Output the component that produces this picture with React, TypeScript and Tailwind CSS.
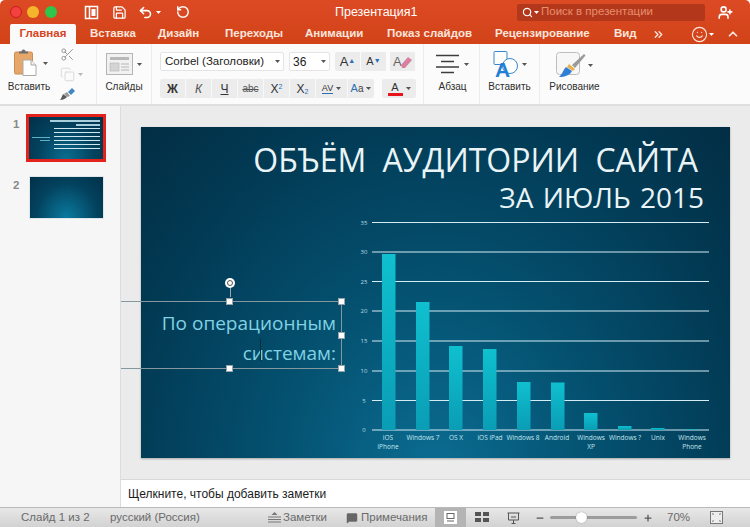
import {
  ChevronsRight,
  ChevronUp,
  Copy,
  MessageSquare,
  Minus,
  Plus,
  RotateCcw,
  Save,
  Scissors,
  Search,
  Smile,
  Undo2,
  UserPlus,
} from "lucide-react";

const tabs = [
  { label: "Вставка", w: "w-[44px]", ml: "ml-[14px]" },
  { label: "Дизайн", w: "w-[42px]", ml: "ml-[24px]" },
  { label: "Переходы", w: "w-[57px]", ml: "ml-[25px]" },
  { label: "Анимации", w: "w-[57px]", ml: "ml-[23px]" },
  { label: "Показ слайдов", w: "w-[85px]", ml: "ml-[25px]" },
  { label: "Рецензирование", w: "w-[95px]", ml: "ml-[23px]" },
  { label: "Вид", w: "w-[22px]", ml: "ml-[24px]" },
];

const bars = [
  { x: 382, top: 254 },
  { x: 416, top: 302 },
  { x: 449, top: 346 },
  { x: 483, top: 349 },
  { x: 517, top: 382 },
  { x: 551, top: 382.5 },
  { x: 584, top: 413 },
  { x: 618, top: 426 },
  { x: 651, top: 428 },
  { x: 685, top: 429.3 },
];

const gridLines = [
  { y: 222.5, label: "35" },
  { y: 252, label: "30" },
  { y: 281.5, label: "25" },
  { y: 311, label: "20" },
  { y: 341, label: "15" },
  { y: 371, label: "10" },
  { y: 400.5, label: "5" },
  { y: 430, label: "0" },
];

const categories = [
  { x: 388, lines: ["iOS", "iPhone"] },
  { x: 423, lines: ["Windows 7"] },
  { x: 456, lines: ["OS X"] },
  { x: 490, lines: ["iOS iPad"] },
  { x: 523, lines: ["Windows 8"] },
  { x: 557, lines: ["Android"] },
  { x: 591, lines: ["Windows", "XP"] },
  { x: 625, lines: ["Windows ?"] },
  { x: 658, lines: ["Unix"] },
  { x: 692, lines: ["Windows", "Phone"] },
];

function Caret({ className = "" }: { className?: string }) {
  return (
    <svg width="5" height="3" viewBox="0 0 5 3" className={className}>
      <path d="M0 0h5L2.5 3z" fill="#555" />
    </svg>
  );
}

function PasteIcon() {
  return (
    <svg width="24" height="27" viewBox="0 0 24 27">
      <rect x="0.5" y="3" width="18" height="22" rx="1.5" fill="#e5a76a" stroke="#c98d50" />
      <path d="M5 4.5V2.5h2.5a2 2 0 0 1 4 0H14v2z" fill="#6d6d6d" />
      <path d="M9 11h8l5 5v10.5H9z" fill="#fff" stroke="#a9a9a9" />
      <path d="M17 11v5h5" fill="#eee" stroke="#a9a9a9" />
    </svg>
  );
}

function SlideLayoutIcon() {
  return (
    <svg width="27" height="22" viewBox="0 0 27 22">
      <rect x="0.5" y="0.5" width="26" height="21" fill="#f1f1f1" stroke="#b5b5b5" />
      <rect x="4" y="4" width="19" height="3" fill="#b8b8b8" />
      <rect x="4" y="10" width="9" height="8" fill="#d4d4d4" stroke="#b5b5b5" strokeWidth="0.6" />
      <path d="M15 11h8M15 14h8M15 17h8" stroke="#b5b5b5" />
    </svg>
  );
}

function ParagraphIcon() {
  return (
    <svg width="23" height="20" viewBox="0 0 23 20">
      <path d="M0 1.5h23M5 7.5h13M0 13h23M5 18.5h13" stroke="#3d3d3d" strokeWidth="1.6" />
    </svg>
  );
}

function InsertTextIcon() {
  return (
    <svg width="26" height="34" viewBox="0 0 26 34">
      <rect x="1" y="0.5" width="13" height="13" rx="1" fill="#fff" stroke="#3b86c9" />
      <circle cx="17" cy="15" r="7.5" fill="#fff" stroke="#3b86c9" />
      <text x="2" y="26" fontFamily="Liberation Sans" fontWeight="700" fontSize="21" fill="#1f7ed6">
        A
      </text>
    </svg>
  );
}

function DrawingIcon() {
  return (
    <svg width="30" height="26" viewBox="0 0 30 26">
      <rect x="0.5" y="0.5" width="23" height="22" rx="3" fill="#f7f7f7" stroke="#bdbdbd" />
      <path d="M16 13L28 2l1.5 1.5L19 16z" fill="#9a9a9a" />
      <path d="M13 12l6 5-2 2-6-4z" fill="#e8b04a" />
      <path d="M10 15l6 4c-2 4-7 6-13 6 3-2 4-7 7-10z" fill="#2f7fd6" />
    </svg>
  );
}

function FormatClearIcon() {
  return (
    <svg width="20" height="16" viewBox="0 0 20 16">
      <text x="0" y="12" fontFamily="Liberation Sans" fontSize="13" fill="#666">
        A
      </text>
      <path d="M8 11l7-8 4 3-7 8H9z" fill="#d880a0" />
    </svg>
  );
}

function FontRowButton({ children, w = "w-[26px]" }: { children: React.ReactNode; w?: string }) {
  return (
    <div className={`flex h-full ${w} items-center justify-center border-r border-[#f8f8f8] text-[#333]`}>
      {children}
    </div>
  );
}

function GroupLabel({ children }: { children: React.ReactNode }) {
  return <div className="text-[10px] leading-[12px] text-[#2f2f2f]">{children}</div>;
}

function Handle() {
  return <div className="h-[7px] w-[7px] border border-[#9aa5aa] bg-white" />;
}

function Chart() {
  return (
    <svg width="360" height="240" viewBox="355 215 360 240" className="ml-[13px] shrink-0">
      <defs>
        <linearGradient id="barFill" x1="0" y1="0" x2="0" y2="1">
          <stop offset="0" stopColor="#0fc0cf" />
          <stop offset="1" stopColor="#0a9db5" />
        </linearGradient>
      </defs>
      {gridLines.map((g) => (
        <g key={g.label}>
          <line x1="372" x2="709" y1={g.y} y2={g.y} stroke="#d4ecf3" strokeWidth="1.2" />
          <text x="364" y={g.y + 2} textAnchor="middle" fontSize="6" fill="#b8dce6" fontFamily="Open Sans">
            {g.label}
          </text>
        </g>
      ))}
      {bars.map((b) => (
        <rect key={b.x} x={b.x} y={b.top} width="13.5" height={430 - b.top} fill="url(#barFill)" />
      ))}
      {categories.map((c) =>
        c.lines.map((line, i) => (
          <text
            key={line + c.x}
            x={c.x}
            y={440 + i * 8.5}
            textAnchor="middle"
            fontSize="6.5"
            fill="#c4e6ee"
            fontFamily="Open Sans"
          >
            {line}
          </text>
        ))
      )}
    </svg>
  );
}

export default function App() {
  return (
    <div className="flex h-[527px] w-[750px] flex-col overflow-hidden rounded-t-[5px] bg-white font-['Liberation_Sans',Arial,sans-serif]">
      {/* title bar */}
      <div className="bg-gradient-to-b from-[#dc4a24] to-[#d24318]">
        <div className="flex h-[24px] items-center pl-[10px] text-white">
          <div className="h-[12px] w-[12px] rounded-full border border-[#c81c24] bg-[#f2413e]" />
          <div className="ml-[5px] h-[12px] w-[12px] rounded-full bg-[#f5b52a]" />
          <div className="ml-[6px] h-[12px] w-[12px] rounded-full bg-[#2fc54a]" />
          <svg width="15" height="15" viewBox="0 0 15 15" className="ml-[27px]">
            <path d="M1.5 1.5h12v12h-12z M5.5 1.5v12" fill="none" stroke="#fff" strokeWidth="1.5" />
            <path d="M7.5 4h4v7h-4z" fill="#fff" />
          </svg>
          <Save size={15} strokeWidth={2} className="ml-[13px]" />
          <Undo2 size={15} strokeWidth={2.5} className="ml-[11px]" />
          <Caret className="ml-[3px] brightness-[5]" />
          <RotateCcw size={14} strokeWidth={2.5} className="ml-[15px]" />
          <div className="ml-[145px] w-[80px] text-[12.5px] font-medium whitespace-nowrap">Презентация1</div>
          <div className="ml-[102px] flex h-[17px] w-[188px] items-center rounded-[2px] bg-[#b3371a] pl-[5px] text-[#e88e70]">
            <Search size={11} strokeWidth={2.5} className="text-white" />
            <Caret className="ml-[1px] brightness-[5]" />
            <span className="ml-[2px] text-[11.5px]">Поиск в презентации</span>
          </div>
          <UserPlus size={15} strokeWidth={2.5} className="ml-[13px]" />
        </div>
        <div className="flex h-[20px] items-stretch pl-[10px] text-[11.5px] font-semibold text-[#fbe6dd]">
          <div className="flex w-[66px] items-center justify-center rounded-t-[2px] bg-[#fafafa] font-bold text-[#d8431f]">
            Главная
          </div>
          {tabs.map((t) => (
            <div key={t.label} className={`flex items-center whitespace-nowrap ${t.ml} ${t.w}`}>
              {t.label}
            </div>
          ))}
          <ChevronsRight size={13} strokeWidth={2.5} className="ml-[16px] self-center" />
          <Smile size={17} strokeWidth={1.6} className="ml-[26px] self-center" />
          <Caret className="ml-[1px] self-center brightness-[5]" />
          <ChevronUp size={14} strokeWidth={3} className="ml-[12px] self-center" />
        </div>
      </div>

      {/* ribbon */}
      <div className="flex h-[62px] shrink-0 border-b-2 border-[#dedede] bg-[#fbfbfb]">
        <div className="flex h-full w-[97px] border-r border-[#ececec] pl-[8px]">
          <div className="flex w-[42px] flex-col items-center">
            <div className="mt-[5px] flex h-[28px] items-start self-start pl-[6px]">
              <PasteIcon />
            </div>
            <div className="mt-[4px]">
              <GroupLabel>Вставить</GroupLabel>
            </div>
          </div>
          <Caret className="mt-[18px] -ml-[7px]" />
          <div className="ml-[12px] flex flex-col items-center gap-[5px] pt-[3px] text-[#9a9a9a]">
            <Scissors size={15} strokeWidth={1.6} />
            <div className="relative">
              <Copy size={15} strokeWidth={1.4} className="text-[#d5d5d5]" />
              <Caret className="absolute top-[6px] left-[18px] opacity-40" />
            </div>
            <svg width="15" height="14" viewBox="0 0 15 14">
              <path d="M8 5l4-4 3 3-4 4z" fill="#3f86c6" />
              <path d="M7 5l3 4-3 1-3-3z" fill="#999" />
              <path d="M3 7l4 3c-2 2-4 3-7 3 1-1 2-4 3-6z" fill="#5a5a5a" />
            </svg>
          </div>
        </div>
        <div className="flex h-full w-[55px] flex-col items-center border-r border-[#ececec]">
          <div className="mt-[9px] flex h-[22px] items-center">
            <SlideLayoutIcon />
            <Caret className="ml-[4px]" />
          </div>
          <div className="mt-[6px]">
            <GroupLabel>Слайды</GroupLabel>
          </div>
        </div>
        <div className="flex h-full w-[272px] flex-col gap-[8px] border-r border-[#ececec] pt-[8px] pl-[8px]">
          <div className="flex h-[19px] items-stretch">
            <div className="flex w-[124px] items-center justify-between rounded-[2px] border border-[#e4e4e4] bg-white pr-[3px] pl-[4px] text-[11.5px] whitespace-nowrap text-[#222]">
              Corbel (Заголовки)
              <Caret />
            </div>
            <div className="ml-[5px] flex w-[41px] items-center justify-between rounded-[2px] border border-[#e4e4e4] bg-white pr-[3px] pl-[3px] text-[12px] text-[#222]">
              36
              <Caret />
            </div>
            <div className="ml-[5px] flex w-[25px] items-center justify-center rounded-l-[2px] bg-[#ececec] text-[13px] text-[#333]">
              A<span className="text-[7px] text-[#2a6fb5]">▲</span>
            </div>
            <div className="ml-[1px] flex w-[25px] items-center justify-center bg-[#ececec] text-[11px] text-[#333]">
              A<span className="text-[7px] text-[#2a6fb5]">▼</span>
            </div>
            <div className="ml-[4px] flex w-[25px] items-center justify-center bg-[#ececec]">
              <FormatClearIcon />
            </div>
          </div>
          <div className="flex h-[19px] items-stretch">
            <div className="flex w-[214px] items-stretch rounded-[2px] bg-[#ececec] text-[12px]">
              <FontRowButton>
                <span className="font-bold">Ж</span>
              </FontRowButton>
              <FontRowButton>
                <span className="italic text-[#555]">К</span>
              </FontRowButton>
              <FontRowButton>
                <span className="underline">Ч</span>
              </FontRowButton>
              <FontRowButton>
                <span className="text-[10px] text-[#555] line-through">abc</span>
              </FontRowButton>
              <FontRowButton>
                <span>
                  X<sup className="text-[7px] text-[#2a6fb5]">2</sup>
                </span>
              </FontRowButton>
              <FontRowButton>
                <span>
                  X<sub className="text-[7px] text-[#2a6fb5]">2</sub>
                </span>
              </FontRowButton>
              <FontRowButton w="w-[32px]">
                <span className="border-b border-[#2a6fb5] text-[9px] leading-[10px]">AV</span>
                <Caret className="ml-[3px]" />
              </FontRowButton>
              <div className="flex flex-1 items-center justify-center text-[#444]">
                <span className="text-[11px] text-[#2a6fb5]">A</span>
                <span className="text-[10px]">a</span>
                <Caret className="ml-[3px]" />
              </div>
            </div>
            <div className="ml-[8px] flex w-[34px] items-center justify-center rounded-[2px] bg-[#ececec]">
              <div className="flex flex-col items-center">
                <span className="text-[11px] leading-[10px] text-[#333]">A</span>
                <div className="mt-[1px] h-[3px] w-[15px] bg-[#e8141c]" />
              </div>
              <Caret className="ml-[3px]" />
            </div>
          </div>
        </div>
        <div className="flex h-full w-[56px] flex-col items-center border-r border-[#ececec] pl-[2px]">
          <div className="mt-[10px] flex h-[20px] items-center">
            <ParagraphIcon />
            <Caret className="ml-[5px]" />
          </div>
          <div className="mt-[7px]">
            <GroupLabel>Абзац</GroupLabel>
          </div>
        </div>
        <div className="flex h-full w-[60px] flex-col items-center border-r border-[#ececec]">
          <div className="mt-[7px] flex h-[27px] items-start">
            <InsertTextIcon />
            <Caret className="mt-[12px] ml-[3px]" />
          </div>
          <div className="mt-[3px]">
            <GroupLabel>Вставить</GroupLabel>
          </div>
        </div>
        <div className="flex h-full w-[68px] flex-col items-center pl-[1px]">
          <div className="mt-[8px] flex h-[26px] items-center">
            <DrawingIcon />
            <Caret className="ml-[2px]" />
          </div>
          <div className="mt-[3px]">
            <GroupLabel>Рисование</GroupLabel>
          </div>
        </div>
      </div>

      {/* workspace */}
      <div className="flex min-h-0 flex-1">
        <div className="flex w-[121px] shrink-0 flex-col border-r border-[#dcdcdc] bg-[#f6f6f6] pt-[8px] text-[11.5px] text-[#888]">
          <div className="flex items-start">
            <div className="mt-[2px] ml-[13px] w-[13px] font-semibold">1</div>
            <div className="flex h-[48px] w-[80px] flex-col items-end border-[3px] border-[#e3231b] bg-[radial-gradient(ellipse_at_50%_100%,#0a6e90_0%,#03425e_55%,#023048_100%)] px-[3px] pt-[3px]">
              <div className="h-[2px] w-[50px] bg-[#a8d0dc]" />
              <div className="mt-[2px] h-[2px] w-[24px] bg-[#a8d0dc]" />
              <div className="mt-[2px] flex w-full items-center gap-[4px]">
                <div className="flex w-[18px] flex-col items-end gap-[2px]">
                  <div className="h-[1px] w-[18px] bg-[#5fb0c4]" />
                  <div className="h-[1px] w-[10px] bg-[#5fb0c4]" />
                </div>
                <div className="flex flex-1 flex-col gap-[3px]">
                  <div className="h-[1px] bg-[#cfe8ef]" />
                  <div className="h-[1px] bg-[#cfe8ef]" />
                  <div className="h-[1px] bg-[#cfe8ef]" />
                  <div className="h-[1px] bg-[#cfe8ef]" />
                  <div className="h-[1px] bg-[#cfe8ef]" />
                  <div className="h-[1px] bg-[#cfe8ef]" />
                </div>
              </div>
            </div>
          </div>
          <div className="mt-[14px] flex items-start">
            <div className="mt-[1px] ml-[13px] w-[16px] font-semibold">2</div>
            <div className="h-[43px] w-[75px] border border-[#dfe6ea] bg-[radial-gradient(ellipse_at_50%_100%,#0a7ba0_0%,#03425e_60%,#023048_100%)]" />
          </div>
        </div>

        <div className="flex min-w-0 flex-1 flex-col">
          <div className="flex-1 bg-[#ebebeb] pt-[21px] pl-[20px]">
            <div className="h-[331px] w-[589px] bg-[radial-gradient(ellipse_at_50%_105%,#0b6d92_0%,#04506f_40%,#023a54_75%,#022e44_100%)] shadow-[0_1px_2px_rgba(0,0,0,0.3)]">
              <div className="flex h-[88px] flex-col items-end pt-[13px] pr-[32px] font-['Open_Sans',sans-serif] whitespace-nowrap text-[#eaf4f6]">
                <div className="text-[32px] leading-[40px] [word-spacing:8px]">ОБЪЁМ АУДИТОРИИ САЙТА</div>
                <div className="-mr-[6px] text-[28px] leading-[35px] [word-spacing:2px]">ЗА ИЮЛЬ 2015</div>
              </div>
              <div className="flex items-start">
                <div className="relative mt-[86px] -ml-[20px] h-[68px] w-[221px] shrink-0 border-y border-r border-[#85979f] pt-[6px] pr-[5px] text-right font-['Open_Sans',sans-serif] text-[19px] leading-[30px] whitespace-nowrap text-[#80d2e4]">
                  <div>По операционным</div>
                  <div>системам:</div>
                  <div className="absolute top-[37px] left-[139px] h-[22px] w-px bg-[#0b2a38]" />
                  <div className="absolute -top-[24px] left-[104px] flex flex-col items-center">
                    <div className="flex h-[10px] w-[10px] items-center justify-center rounded-full bg-white">
                      <div className="h-[6px] w-[6px] rounded-full border border-[#555]" />
                    </div>
                    <div className="h-[9px] w-px bg-[#9aa5aa]" />
                  </div>
                  <div className="absolute -top-[4px] left-[105px]">
                    <Handle />
                  </div>
                  <div className="absolute -top-[4px] -right-[4px]">
                    <Handle />
                  </div>
                  <div className="absolute top-[30px] -right-[4px]">
                    <Handle />
                  </div>
                  <div className="absolute -right-[4px] -bottom-[4px]">
                    <Handle />
                  </div>
                  <div className="absolute -bottom-[4px] left-[105px]">
                    <Handle />
                  </div>
                </div>
                <Chart />
              </div>
            </div>
          </div>
          <div className="flex h-[28px] shrink-0 items-center border-t border-[#d8d8d8] bg-white pl-[7px] text-[12px] text-[#1c1c1c]">
            Щелкните, чтобы добавить заметки
          </div>
        </div>
      </div>

      {/* status bar */}
      <div className="flex h-[20px] shrink-0 items-center border-t border-[#b9b9b9] bg-gradient-to-b from-[#e8e8e8] to-[#d2d2d2] pl-[21px] text-[11.5px] whitespace-nowrap text-[#6a6a6a]">
        <div className="w-[89px]">Слайд 1 из 2</div>
        <div className="w-[158px]">русский (Россия)</div>
        <svg width="13" height="11" viewBox="0 0 13 11">
          <path d="M0 5h13M0 7.5h13M0 10h13" stroke="#777" />
          <path d="M6.5 0l3 3h-6z" fill="#777" />
        </svg>
        <div className="ml-[2px] w-[63px]">Заметки</div>
        <MessageSquare size={12} fill="#666" strokeWidth={1} />
        <div className="ml-[3px] w-[74px]">Примечания</div>
        <div className="flex h-full w-[31px] items-center justify-center bg-[#b4b4b4]">
          <svg width="13" height="13" viewBox="0 0 13 13">
            <rect x="0.5" y="0.5" width="12" height="12" fill="#fff" stroke="#fff" />
            <rect x="3" y="2.5" width="7" height="5" fill="none" stroke="#666" />
            <path d="M3 10h7" stroke="#666" />
          </svg>
        </div>
        <svg width="14" height="11" viewBox="0 0 14 11" className="ml-[9px]">
          <path d="M0 0h6v4H0zM8 0h6v4H8zM0 6h6v4H0zM8 6h6v4H8z" fill="#555" />
        </svg>
        <svg width="13" height="12" viewBox="0 0 13 12" className="ml-[18px]">
          <path d="M0.5 1h12M1.5 1v7h10V1" fill="none" stroke="#555" />
          <path d="M4 5h5M6.5 8v3M4.5 11.5h4" stroke="#555" />
        </svg>
        <Minus size={10} strokeWidth={3} className="ml-[15px] text-[#555]" />
        <div className="ml-[5px] h-[3px] w-[87px] rounded-full bg-[#9c9c9c]">
          <div className="ml-[26px] -mt-[4px] h-[11px] w-[11px] rounded-full bg-white shadow-[0_0_1px_rgba(0,0,0,0.5)]" />
        </div>
        <Plus size={10} strokeWidth={3} className="ml-[6px] text-[#555]" />
        <div className="ml-[14px] w-[23px]">70%</div>
        <svg width="13" height="13" viewBox="0 0 13 13" className="ml-[20px]">
          <rect x="0.5" y="0.5" width="12" height="12" fill="#eee" stroke="#777" />
          <path d="M2 2l2 1-1 1zM11 2l-2 1 1 1zM2 11l2-1-1-1zM11 11l-2-1 1-1z" fill="#555" />
        </svg>
      </div>
    </div>
  );
}
